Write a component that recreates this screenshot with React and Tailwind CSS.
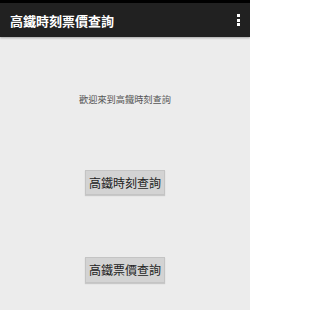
export default function App() {
  const font = { fontFamily: '"Noto Sans CJK TC", "Noto Sans CJK SC", sans-serif' };
  return (
    <div className="w-[250px] h-[310px] bg-[#ececec] flex flex-col overflow-hidden" style={font}>
      <div className="h-[3px] bg-black" />
      <div className="h-[34px] bg-[#212121] flex items-center justify-between pl-[10px] pr-[10px] shadow-[0_1px_2px_rgba(0,0,0,0.3)]">
        <span className="text-white text-[13px] leading-none font-bold">高鐵時刻票價查詢</span>
        <div className="flex flex-col gap-[1.5px] items-center">
          <span className="w-[3px] h-[3px] bg-white" />
          <span className="w-[3px] h-[3px] bg-white" />
          <span className="w-[3px] h-[3px] bg-white" />
        </div>
      </div>
      <div className="flex flex-col items-center">
        <div className="mt-[58px] text-[9.2px] leading-none text-[#555]">歡迎來到高鐵時刻查詢</div>
        <button className="mt-[66px] w-[80px] h-[25px] bg-[#d3d3d3] border border-[#c4c4c4] text-[12px] leading-none text-[#222] shadow-[0_1px_1px_rgba(0,0,0,0.15)]">高鐵時刻查詢</button>
        <button className="mt-[62px] w-[80px] h-[26px] bg-[#d3d3d3] border border-[#c4c4c4] text-[12px] leading-none text-[#222] shadow-[0_1px_1px_rgba(0,0,0,0.15)]">高鐵票價查詢</button>
      </div>
    </div>
  );
}
